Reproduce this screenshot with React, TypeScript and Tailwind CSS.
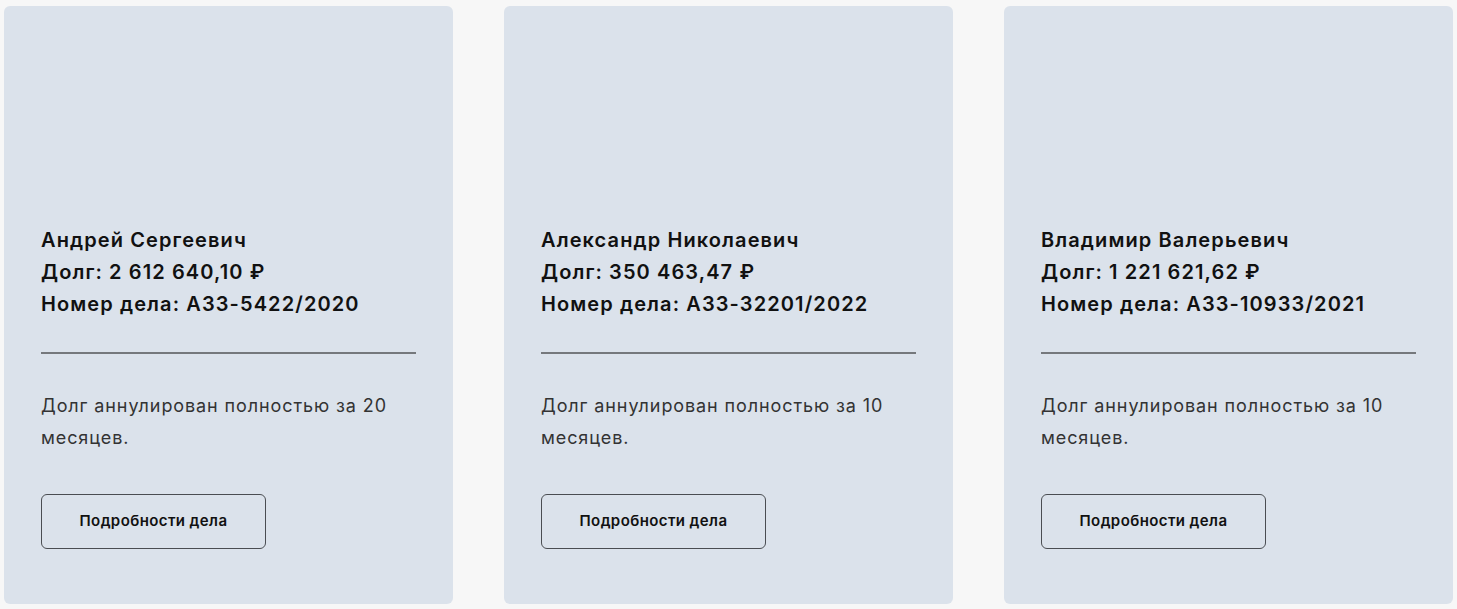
const cases = [
  {
    name: 'Андрей Сергеевич',
    debt: '2 612 640,10 ₽',
    number: 'А33-5422/2020',
    months: 20,
  },
  {
    name: 'Александр Николаевич',
    debt: '350 463,47 ₽',
    number: 'А33-32201/2022',
    months: 10,
  },
  {
    name: 'Владимир Валерьевич',
    debt: '1 221 621,62 ₽',
    number: 'А33-10933/2021',
    months: 10,
  },
];

export default function App() {
  return (
    <div
      className="min-h-screen bg-[#f7f7f7] px-[4px] pt-[6px] pb-[5px]"
      style={{ fontFamily: 'Inter, "Noto Sans", sans-serif' }}
    >
      <div className="grid grid-cols-3 gap-[51px]">
        {cases.map(item => (
          <div
            key={item.number}
            className="flex h-[598px] flex-col justify-end rounded-[6px] bg-[#dbe2eb] px-[37px] pb-[55px]"
          >
            {/* Заголовок дела */}
            <div className="text-[20px] font-semibold leading-[32px] tracking-[1.1px] text-[#111]">
              <div>{item.name}</div>
              <div>Долг: {item.debt}</div>
              <div>Номер дела: {item.number}</div>
            </div>

            <div className="mt-[32px] h-[2px] w-full bg-[#75787c]" />

            <p className="mt-[36px] max-w-[360px] text-[18px] leading-[32px] tracking-[0.9px] text-[#333]">
              Долг аннулирован полностью за {item.months} месяцев.
            </p>

            <button className="mt-[40px] flex h-[55px] w-[225px] items-center justify-center rounded-[6px] border border-[#4a4d52] text-[15px] font-semibold tracking-[0.4px] text-[#111]">
              Подробности дела
            </button>
          </div>
        ))}
      </div>
    </div>
  );
}
